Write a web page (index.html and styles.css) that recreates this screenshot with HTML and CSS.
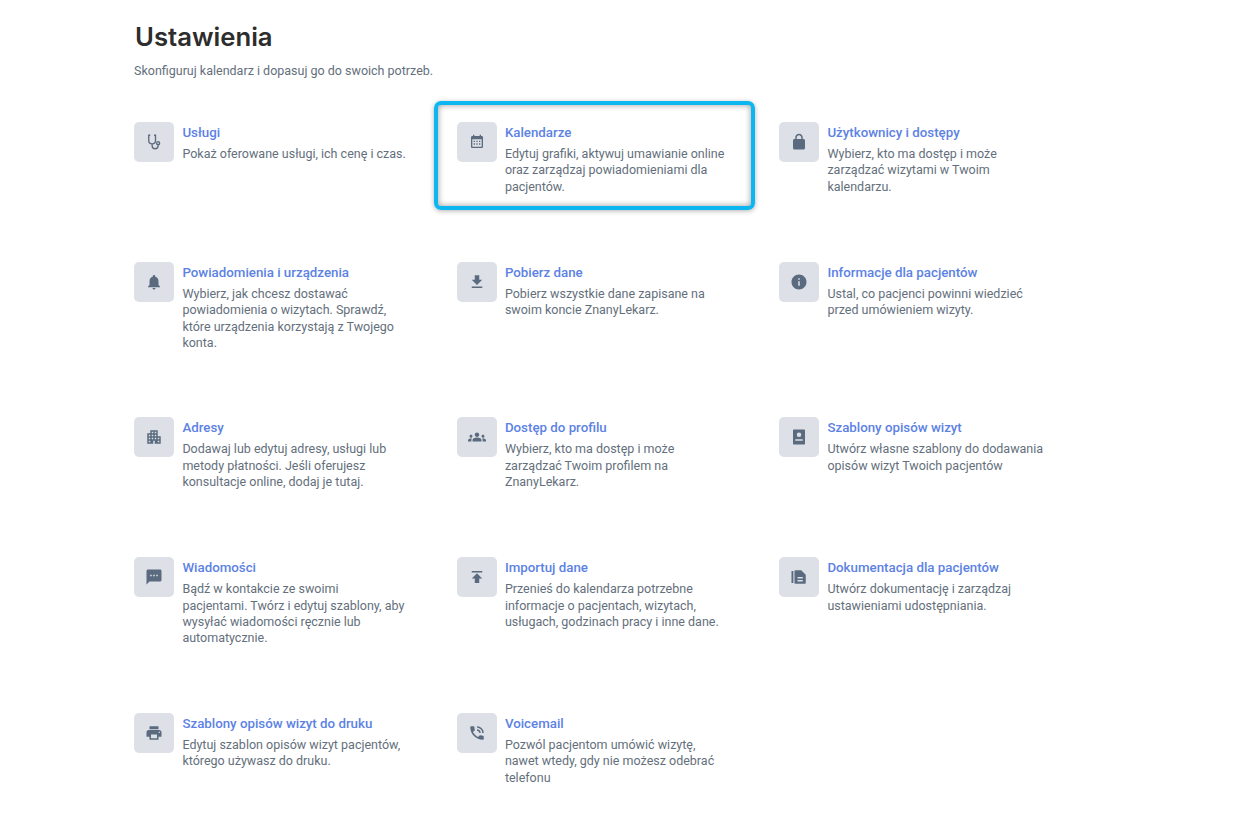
FILE: index.html
```html
<!DOCTYPE html>
<html lang="pl">
<head>
<meta charset="utf-8">
<title>Ustawienia</title>
<link rel="stylesheet" href="styles.css">
</head>
<body>
<main class="page">
  <h1 class="title">Ustawienia</h1>
  <p class="lead">Skonfiguruj kalendarz i dopasuj go do swoich potrzeb.</p>
  <section class="grid">
    <a class="card">
      <span class="tile"><svg class="icon" viewBox="0 0 24 24"><path class="line" d="M7 3H5v7a4.500 4.500 0 0 0 9 0V3h-2M9.500 14.500V17a4 4 0 0 0 8 0v-1.500"/><circle class="line" cx="17.500" cy="13.500" r="2"/></svg></span>
      <div class="body"><h2 class="name">Usługi</h2><p class="desc">Pokaż oferowane usługi, ich cenę i czas.</p></div>
    </a>
    <a class="card card-marked">
      <span class="tile"><svg class="icon icon-sm" viewBox="0 0 24 24"><path d="M19 3h-1V1h-2v2H8V1H6v2H5c-1.100 0-2 .9-2 2v14c0 1.100.9 2 2 2h14c1.100 0 2-.9 2-2V5c0-1.100-.9-2-2-2zm0 16H5V8h14v11zM7 10h2v2H7zm4 0h2v2h-2zm4 0h2v2h-2zm-8 4h2v2H7zm4 0h2v2h-2zm4 0h2v2h-2z"/></svg></span>
      <div class="body"><h2 class="name">Kalendarze</h2><p class="desc">Edytuj grafiki, aktywuj umawianie online oraz zarządzaj powiadomieniami dla pacjentów.</p></div>
    </a>
    <a class="card">
      <span class="tile"><svg class="icon" viewBox="0 0 24 24"><path d="M18 8h-1V6c0-2.760-2.240-5-5-5S7 3.240 7 6v2H6c-1.100 0-2 .9-2 2v10c0 1.100.9 2 2 2h12c1.100 0 2-.9 2-2V10c0-1.100-.9-2-2-2zM9 6c0-1.660 1.340-3 3-3s3 1.340 3 3v2H9V6z"/></svg></span>
      <div class="body"><h2 class="name">Użytkownicy i dostępy</h2><p class="desc">Wybierz, kto ma dostęp i może zarządzać wizytami w Twoim kalendarzu.</p></div>
    </a>

    <a class="card">
      <span class="tile"><svg class="icon" viewBox="0 0 24 24"><path d="M12 22c1.100 0 2-.9 2-2h-4c0 1.100.9 2 2 2zm6-6v-5c0-3.070-1.630-5.640-4.500-6.320V4c0-.83-.67-1.500-1.500-1.500s-1.500.67-1.500 1.500v.68C7.640 5.360 6 7.920 6 11v5l-2 2v1h16v-1l-2-2z"/></svg></span>
      <div class="body"><h2 class="name">Powiadomienia i urządzenia</h2><p class="desc">Wybierz, jak chcesz dostawać powiadomienia o wizytach. Sprawdź, które urządzenia korzystają z Twojego konta.</p></div>
    </a>
    <a class="card">
      <span class="tile"><svg class="icon" viewBox="0 0 24 24"><path d="M19 9h-4V3H9v6H5l7 7 7-7zM5 18v2h14v-2H5z"/></svg></span>
      <div class="body"><h2 class="name">Pobierz dane</h2><p class="desc">Pobierz wszystkie dane zapisane na swoim koncie ZnanyLekarz.</p></div>
    </a>
    <a class="card">
      <span class="tile"><svg class="icon" viewBox="0 0 24 24"><path d="M12 2C6.480 2 2 6.480 2 12s4.480 10 10 10 10-4.480 10-10S17.520 2 12 2zm1 15h-2v-6h2v6zm0-8h-2V7h2v2z"/></svg></span>
      <div class="body"><h2 class="name">Informacje dla pacjentów</h2><p class="desc">Ustal, co pacjenci powinni wiedzieć przed umówieniem wizyty.</p></div>
    </a>

    <a class="card">
      <span class="tile"><svg class="icon" viewBox="0 0 24 24"><path d="M17 11V3H7v4H3v14h8v-4h2v4h8V11h-4zM7 19H5v-2h2v2zm0-4H5v-2h2v2zm0-4H5V9h2v2zm4 4H9v-2h2v2zm0-4H9V9h2v2zm0-4H9V5h2v2zm4 8h-2v-2h2v2zm0-4h-2V9h2v2zm0-4h-2V5h2v2zm4 12h-2v-2h2v2zm0-4h-2v-2h2v2z"/></svg></span>
      <div class="body"><h2 class="name">Adresy</h2><p class="desc">Dodawaj lub edytuj adresy, usługi lub metody płatności. Jeśli oferujesz konsultacje online, dodaj je tutaj.</p></div>
    </a>
    <a class="card">
      <span class="tile"><svg class="icon" viewBox="0 0 24 24"><path d="M4 13c1.100 0 2-.9 2-2s-.9-2-2-2-2 .9-2 2 .9 2 2 2zm1.130 1.100C4.760 14.040 4.390 14 4 14c-.99 0-1.930.21-2.780.58C.48 14.900 0 15.620 0 16.430V18h4.500v-1.610c0-.83.23-1.610.63-2.290zM20 13c1.100 0 2-.9 2-2s-.9-2-2-2-2 .9-2 2 .9 2 2 2zm4 3.430c0-.81-.48-1.530-1.220-1.850C21.930 14.210 20.990 14 20 14c-.39 0-.76.04-1.130.1.4.68.63 1.460.63 2.290V18H24v-1.570zM16.240 13.650c-1.170-.52-2.610-.9-4.240-.9-1.630 0-3.070.39-4.240.9C6.680 14.130 6 15.210 6 16.390V18h12v-1.610c0-1.180-.68-2.260-1.760-2.740zM12 12c1.660 0 3-1.340 3-3s-1.340-3-3-3-3 1.340-3 3 1.340 3 3 3z"/></svg></span>
      <div class="body"><h2 class="name">Dostęp do profilu</h2><p class="desc">Wybierz, kto ma dostęp i może zarządzać Twoim profilem na ZnanyLekarz.</p></div>
    </a>
    <a class="card">
      <span class="tile"><svg class="icon" viewBox="0 0 24 24"><path fill-rule="evenodd" d="M5 2h14a1 1 0 0 1 1 1v18a1 1 0 0 1-1 1H5a1 1 0 0 1-1-1V3a1 1 0 0 1 1-1zm7 4a3 3 0 1 0 0 6 3 3 0 0 0 0-6zm-5 9v2h10v-2H7z"/></svg></span>
      <div class="body"><h2 class="name">Szablony opisów wizyt</h2><p class="desc">Utwórz własne szablony do dodawania opisów wizyt Twoich pacjentów</p></div>
    </a>

    <a class="card">
      <span class="tile"><svg class="icon" viewBox="0 0 24 24"><path d="M20 2H4c-1.100 0-1.990.9-1.990 2L2 22l4-4h14c1.100 0 2-.9 2-2V4c0-1.100-.9-2-2-2zM9 11H7V9h2v2zm4 0h-2V9h2v2zm4 0h-2V9h2v2z"/></svg></span>
      <div class="body"><h2 class="name">Wiadomości</h2><p class="desc">Bądź w kontakcie ze swoimi pacjentami. Twórz i edytuj szablony, aby wysyłać wiadomości ręcznie lub automatycznie.</p></div>
    </a>
    <a class="card">
      <span class="tile"><svg class="icon" viewBox="0 0 24 24"><path d="M5 4v2h14V4H5zm0 10h4v6h6v-6h4l-7-7-7 7z"/></svg></span>
      <div class="body"><h2 class="name">Importuj dane</h2><p class="desc">Przenieś do kalendarza potrzebne informacje o pacjentach, wizytach, usługach, godzinach pracy i inne dane.</p></div>
    </a>
    <a class="card">
      <span class="tile"><svg class="icon" viewBox="0 0 24 24"><path fill-rule="evenodd" d="M2 4h2.500v16H2zM7 3h8l6 6v11a1 1 0 0 1-1 1H7a1 1 0 0 1-1-1V4a1 1 0 0 1 1-1zm3 9v2h7v-2h-7zm0 4v2h7v-2h-7z"/></svg></span>
      <div class="body"><h2 class="name">Dokumentacja dla pacjentów</h2><p class="desc">Utwórz dokumentację i zarządzaj ustawieniami udostępniania.</p></div>
    </a>

    <a class="card">
      <span class="tile"><svg class="icon" viewBox="0 0 24 24"><path d="M19 8H5c-1.660 0-3 1.340-3 3v6h4v4h12v-4h4v-6c0-1.660-1.340-3-3-3zm-3 11H8v-5h8v5zm3-7c-.55 0-1-.45-1-1s.45-1 1-1 1 .45 1 1-.45 1-1 1zm-1-9H6v4h12V3z"/></svg></span>
      <div class="body"><h2 class="name">Szablony opisów wizyt do druku</h2><p class="desc">Edytuj szablon opisów wizyt pacjentów, którego używasz do druku.</p></div>
    </a>
    <a class="card">
      <span class="tile"><svg class="icon" viewBox="0 0 24 24"><path d="M20 15.500c-1.250 0-2.450-.2-3.570-.57-.35-.11-.74-.03-1.020.24l-2.200 2.200c-2.830-1.440-5.150-3.750-6.590-6.590l2.200-2.210c.28-.26.36-.65.25-1C8.700 6.450 8.500 5.250 8.500 4c0-.55-.45-1-1-1H4c-.55 0-1 .45-1 1 0 9.390 7.610 17 17 17 .55 0 1-.45 1-1v-3.500c0-.55-.45-1-1-1zM19 12h2c0-4.970-4.030-9-9-9v2c3.870 0 7 3.130 7 7zm-4 0h2c0-2.760-2.240-5-5-5v2c1.660 0 3 1.340 3 3z"/></svg></span>
      <div class="body"><h2 class="name">Voicemail</h2><p class="desc">Pozwól pacjentom umówić wizytę, nawet wtedy, gdy nie możesz odebrać telefonu</p></div>
    </a>
  </section>
</main>
</body>
</html>
```

FILE: styles.css
```css
* {
  box-sizing: border-box;
}

html,
body {
  margin: 0;
  background: #ffffff;
}

body {
  font-family: Roboto, "Liberation Sans", sans-serif;
  color: #646f7c;
}

.page {
  padding: 21px 0 0 134px;
}

.title {
  margin: 0 0 0 1px;
  font-family: Inter, "Liberation Sans", sans-serif;
  font-size: 25.7px;
  line-height: 32px;
  font-weight: 600;
  color: #2d2d2d;
}

.lead {
  margin: 10px 0 0;
  font-size: 12.5px;
  line-height: 16px;
}

.grid {
  display: grid;
  grid-template-columns: repeat(3, 322.5px);
  grid-template-rows: 140px 155.5px 140px 155.5px auto;
  margin-top: 42.7px;
}

.card {
  position: relative;
  display: flex;
  gap: 8.4px;
  align-items: flex-start;
}

.card-marked::after {
  content: "";
  box-sizing: border-box;
  position: absolute;
  left: -23px;
  top: -21px;
  width: 321px;
  height: 109px;
  border: 4px solid #0cb6f0;
  border-radius: 7px;
  box-shadow: 0 1px 5px rgba(0, 0, 0, 0.3), inset 0 0 6px rgba(0, 0, 0, 0.4);
}

.tile {
  flex: none;
  display: flex;
  align-items: center;
  justify-content: center;
  width: 40px;
  height: 40px;
  border-radius: 5px;
  background: #dde0e6;
}

.icon {
  width: 18px;
  height: 18px;
  fill: #5b6b7f;
}

.icon-sm {
  width: 16px;
  height: 16px;
}

.line {
  fill: none;
  stroke: #5b6b7f;
  stroke-width: 1.8;
}

.body {
  width: 223.5px;
  padding-top: 1.3px;
}

.name {
  margin: 0;
  font-size: 13.3px;
  line-height: 20px;
  font-weight: 500;
  color: #5c82e4;
}

.desc {
  margin: 3px 0 0;
  font-size: 12.5px;
  line-height: 16.33px;
}
```
